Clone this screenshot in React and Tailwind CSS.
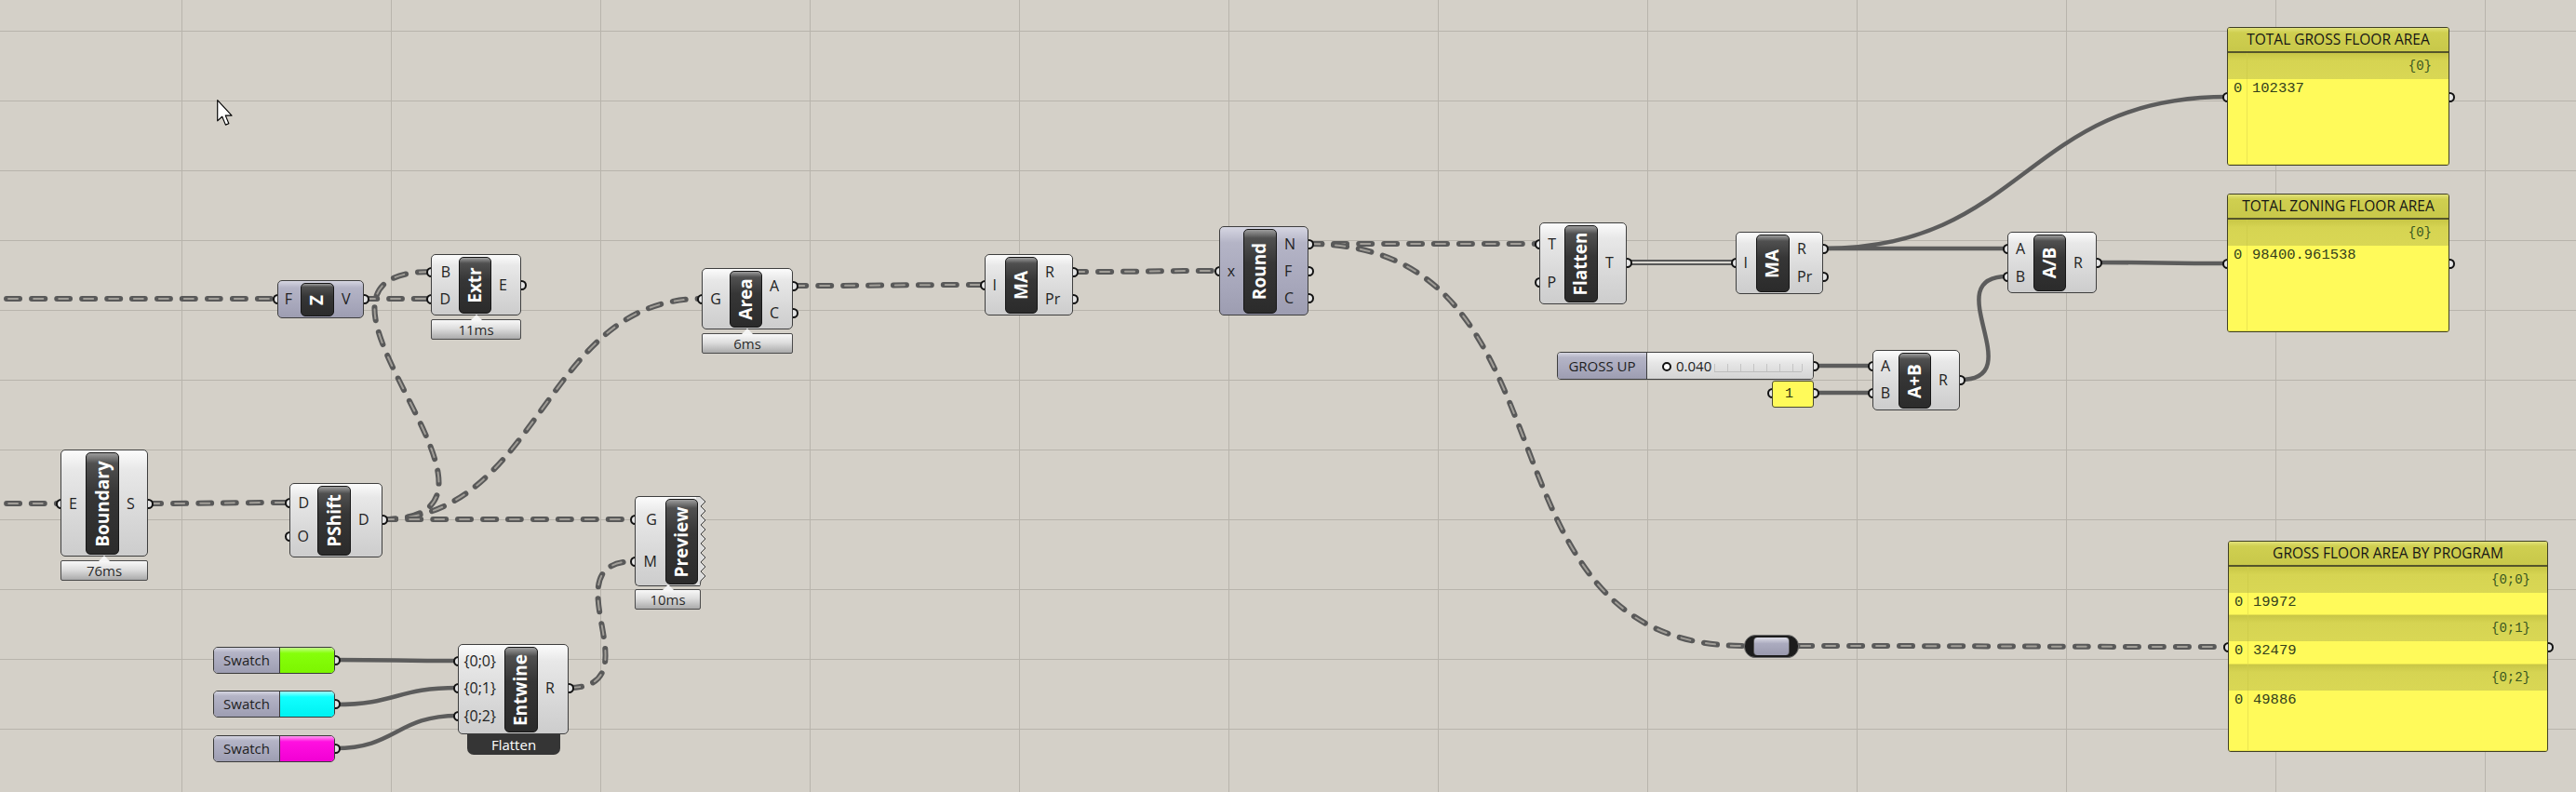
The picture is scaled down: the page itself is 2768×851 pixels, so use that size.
import React from 'react';

// wires: [x1, y1, x2, y2] from an output to an input
const DASHED = [
  [-20, 321, 298, 321],
  [391, 321, 463, 321],
  [411, 558, 463, 292],
  [-20, 541, 65, 541],
  [159, 541, 311, 540],
  [411, 558, 754, 321],
  [411, 558, 682, 558],
  [852, 307, 1058, 306],
  [1153, 292, 1310, 291],
  [1406, 262, 1654, 262],
  [1406, 262, 1874, 694],
  [1933, 694, 2394, 695],
  [611, 739, 682, 603],
];
const SOLID = [
  [1959, 267, 2157, 267],
  [1959, 267, 2393, 104],
  [2253, 282, 2393, 283],
  [1949, 393, 2012, 393],
  [1949, 422, 2012, 422],
  [2106, 408, 2157, 297],
  [360, 709, 492, 710],
  [360, 757, 492, 739],
  [360, 804, 492, 769],
];
const TREE = [[1748, 282, 1865, 282]];

const NODES = [
  { name: 'Z', x: 298, y: 301, w: 93, h: 41, bx: 323, tone: 'purple', ins: [['F', 321]], outs: [['V', 321]] },
  { name: 'Extr', x: 463, y: 273, w: 97, h: 66, bx: 493, bw: 35, ins: [['B', 292], ['D', 321]], outs: [['E', 306]], timer: '11ms' },
  { name: 'Boundary', x: 65, y: 483, w: 94, h: 115, bx: 92, ins: [['E', 541]], outs: [['S', 541]], timer: '76ms' },
  { name: 'PShift', x: 311, y: 519, w: 100, h: 80, bx: 341, ins: [['D', 540], ['O', 576]], outs: [['D', 558]] },
  { name: 'Area', x: 754, y: 288, w: 98, h: 66, bx: 784, bw: 35, ins: [['G', 321]], outs: [['A', 307], ['C', 336]], timer: '6ms' },
  { name: 'MA', x: 1058, y: 273, w: 95, h: 66, bx: 1080, bw: 35, ins: [['I', 306]], outs: [['R', 292], ['Pr', 321]] },
  { name: 'Round', x: 1310, y: 243, w: 96, h: 96, bx: 1336, tone: 'purple', ins: [['x', 291]], outs: [['N', 262], ['F', 291], ['C', 320]] },
  { name: 'Flatten', x: 1654, y: 239, w: 94, h: 88, bx: 1681, ins: [['T', 262], ['P', 303]], outs: [['T', 282]] },
  { name: 'MA', x: 1865, y: 249, w: 94, h: 67, bx: 1887, ins: [['I', 282]], outs: [['R', 267], ['Pr', 297]] },
  { name: 'A+B', x: 2012, y: 376, w: 94, h: 65, bx: 2040, bw: 35, ins: [['A', 393], ['B', 422]], outs: [['R', 408]] },
  { name: 'A/B', x: 2157, y: 249, w: 96, h: 66, bx: 2185, bw: 35, ins: [['A', 267], ['B', 297]], outs: [['R', 282]] },
  { name: 'Entwine', x: 492, y: 692, w: 119, h: 97, bx: 542, ins: [['{0;0}', 710], ['{0;1}', 739], ['{0;2}', 769]], outs: [['R', 739]], tag: 'Flatten' },
];

const SWATCHES = [
  { y: 695, fill: 'bg-[linear-gradient(to_bottom,#c4ff8a,#86ff0a_22%,#7cf500)]' },
  { y: 742, fill: 'bg-[linear-gradient(to_bottom,#9effff,#10ffff_22%,#00f2f2)]' },
  { y: 790, fill: 'bg-[linear-gradient(to_bottom,#ff9cf0,#ff10e0_22%,#f200d4)]' },
];

const LIGHT = 'bg-[linear-gradient(to_bottom,#fcfcfc,#e8e8e8_18%,#d6d6d6_70%,#cdcdcd)]';
const PURPLE = 'bg-[linear-gradient(to_bottom,#d6d6e2,#b4b4c6_18%,#a6a6ba_70%,#9d9db1)]';
const DARK = 'bg-[linear-gradient(to_bottom,#9c9c9c,#505050_10%,#363636_40%,#2b2b2b)]';

// Grasshopper style bezier: handles stretch horizontally from each end.
function wirePath([x1, y1, x2, y2]) {
  const k = Math.max(Math.abs(x2 - x1) * 0.5, Math.abs(y2 - y1) * 0.7);
  return `M${x1} ${y1} C${x1 + k} ${y1} ${x2 - k} ${y2} ${x2} ${y2}`;
}

function Wires() {
  const vlines = [];
  for (let x = -30; x < 2768; x += 225) vlines.push(x);
  const hlines = [];
  for (let y = 33; y < 851; y += 75) hlines.push(y);
  return (
    <svg className="absolute inset-0" width="2768" height="851">
      {vlines.map(x => <line key={'v' + x} x1={x + 0.5} y1="0" x2={x + 0.5} y2="851" stroke="#b8b4ac" strokeWidth="1" />)}
      {hlines.map(y => <line key={'h' + y} x1="0" y1={y + 0.5} x2="2768" y2={y + 0.5} stroke="#b8b4ac" strokeWidth="1" />)}
      {SOLID.map((w, i) => <path key={'s' + i} d={wirePath(w)} fill="none" stroke="#5c5c5c" strokeWidth="4.5" />)}
      {TREE.map((w, i) => (
        <g key={'t' + i}>
          <path d={wirePath(w)} fill="none" stroke="#585858" strokeWidth="6" />
          <path d={wirePath(w)} fill="none" stroke="#d8d5cf" strokeWidth="2" />
        </g>
      ))}
      {DASHED.map((w, i) => (
        <g key={'d' + i}>
          <path d={wirePath(w)} fill="none" stroke="#595959" strokeWidth="6" strokeDasharray="14 13" strokeLinecap="round" />
          <path d={wirePath(w)} fill="none" stroke="#a19e98" strokeWidth="2" strokeDasharray="10 17" strokeDashoffset="-2" strokeLinecap="round" />
        </g>
      ))}
    </svg>
  );
}

function Port({ x, y }) {
  return <div className="absolute h-[11px] w-[11px] rounded-full border-[2.5px] border-[#111] bg-[#e4e4e4]" style={{ left: x - 5.5, top: y - 5.5 }} />;
}

function Timer({ x, y, w, text }) {
  return (
    <div className="absolute h-[22px] rounded-[2px] border border-[#4a4a4a] bg-[linear-gradient(to_bottom,#f8f8f8,#dedede_45%,#aaaaaa)] text-center text-[15px] leading-[20px] text-[#2a2a2a]" style={{ left: x, top: y, width: w }}>
      <div className="absolute -top-[6px] left-1/2 h-0 w-0 -translate-x-1/2 border-x-[6px] border-b-[6px] border-x-transparent border-b-[#f4f4f4]" />
      {text}
    </div>
  );
}

function Node({ name, x, y, w, h, bx, bw = 36, tone, ins, outs, timer, tag }) {
  return (
    <>
      {ins.map(([l, py]) => <Port key={'pi' + l + py} x={x} y={py} />)}
      {outs.map(([l, py]) => <Port key={'po' + l + py} x={x + w} y={py} />)}
      {tag && (
        <div className="absolute flex h-[24px] items-end justify-center rounded-b-[7px] bg-[#353535] pb-[1px] text-[15px] leading-[20px] text-white" style={{ left: x + 10, top: y + h - 2, width: w - 19 }}>
          {tag}
        </div>
      )}
      <div className={`absolute rounded-[5px] border border-[#3e3e3e] ${tone === 'purple' ? PURPLE : LIGHT}`} style={{ left: x, top: y, width: w, height: h }} />
      <div className={`absolute flex items-center justify-center rounded-[5px] border border-[#161616] ${DARK}`} style={{ left: bx, top: y + 3, width: bw, height: h - 5 }}>
        <span className="-rotate-90 whitespace-nowrap text-[19px] font-bold leading-none text-white">{name}</span>
      </div>
      {ins.map(([l, py]) => (
        <div key={'li' + l + py} className="absolute -translate-y-1/2 text-right text-[16px] leading-none text-[#222]" style={{ left: x, width: bx - 9 - x, top: py }}>{l}</div>
      ))}
      {outs.map(([l, py]) => (
        <div key={'lo' + l + py} className="absolute -translate-y-1/2 text-[16px] leading-none text-[#222]" style={{ left: bx + bw + 8, top: py }}>{l}</div>
      ))}
      {timer && <Timer x={x} y={y + h + 4} w={w} text={timer} />}
    </>
  );
}

function Preview() {
  return (
    <>
      <Port x={682} y={558} />
      <Port x={682} y={603} />
      <div className={`absolute left-[682px] top-[533px] h-[97px] w-[70px] rounded-l-[5px] border-y border-l border-[#3e3e3e] ${LIGHT}`} />
      <svg className="absolute left-[748px] top-[533px]" width="12" height="97">
        <path d="M0 0.5 L4 0.5 L10 6 L5 11 L10 16 L5 21 L10 26 L5 31 L10 36 L5 41 L10 46 L5 51 L10 56 L5 61 L10 66 L5 71 L10 76 L5 81 L10 86 L5 91 L4 96.5 L0 96.5 Z" fill="#dcdcdc" stroke="#3e3e3e" strokeWidth="1" />
        <rect x="0" y="1" width="4" height="95" fill="#dcdcdc" />
      </svg>
      <div className={`absolute left-[715px] top-[536px] flex h-[92px] w-[35px] items-center justify-center rounded-[5px] border border-[#161616] ${DARK}`}>
        <span className="-rotate-90 whitespace-nowrap text-[19px] font-bold leading-none text-white">Preview</span>
      </div>
      <div className="absolute left-[682px] top-[558px] w-[24px] -translate-y-1/2 text-right text-[16px] leading-none text-[#222]">G</div>
      <div className="absolute left-[682px] top-[603px] w-[24px] -translate-y-1/2 text-right text-[16px] leading-none text-[#222]">M</div>
      <Timer x={682} y={633} w={71} text="10ms" />
    </>
  );
}

function Swatch({ y, fill }) {
  return (
    <>
      <Port x={360} y={y + 14} />
      <div className="absolute left-[229px] flex h-[29px] w-[131px] overflow-hidden rounded-[5px] border border-[#3a3a3a]" style={{ top: y }}>
        <div className={`flex w-[71px] items-center justify-center border-r border-[#3a3a3a] text-[15px] text-[#1e1e1e] ${PURPLE}`}>Swatch</div>
        <div className={`flex-1 ${fill}`} />
      </div>
    </>
  );
}

function Slider() {
  return (
    <>
      <Port x={1949} y={393} />
      <div className="absolute left-[1673px] top-[378px] flex h-[30px] w-[276px] overflow-hidden rounded-[4px] border border-[#3e3e3e]">
        <div className={`flex w-[96px] items-center justify-center border-r border-[#3e3e3e] text-[15px] text-[#1e1e1e] ${PURPLE}`}>GROSS UP</div>
        <div className="relative flex-1 bg-[linear-gradient(to_bottom,#fafafa,#e6e6e6_40%,#d4d4d4)]">
          <div className="absolute left-[16px] top-[10px] h-[10px] w-[10px] rounded-full border-[2.5px] border-[#111] bg-white" />
          <div className="absolute left-[31px] top-[5px] text-[15px] leading-[18px] text-[#222]">0.040</div>
          <svg className="absolute left-[72px] top-[8px]" width="96" height="14">
            <line x1="0" y1="12.5" x2="94" y2="12.5" stroke="#bdbdbd" />
            {[0, 14, 28, 42, 56, 70, 84, 94].map(t => <line key={t} x1={t + 0.5} y1="4" x2={t + 0.5} y2="12" stroke="#c4c4c4" />)}
          </svg>
        </div>
      </div>
    </>
  );
}

function NumPanel() {
  return (
    <>
      <Port x={1904} y={422} />
      <Port x={1949} y={422} />
      <div className="absolute left-[1904px] top-[409px] h-[29px] w-[45px] rounded-[3px] border border-[#4a4a30] bg-[#fffa5a] pl-[13px] font-['Liberation_Mono',monospace] text-[15px] leading-[27px] text-[#2c3412]">1</div>
    </>
  );
}

function Relay() {
  return (
    <div className="absolute left-[1874px] top-[682px] h-[25px] w-[59px] rounded-[12px] border border-[#6a6a6a] bg-[#1c1c1c] px-[9px] py-[2px]">
      <div className="h-full w-full rounded-[4px] border-x border-[#555] bg-[linear-gradient(to_bottom,#dcdce6,#ababbf_35%,#9a9aae)]" />
    </div>
  );
}

function Panel({ x, y, w, h, title, sections, portY }) {
  return (
    <>
      <Port x={x} y={portY} />
      <Port x={x + w} y={portY} />
      <div className="absolute flex flex-col overflow-hidden rounded-[3px] border border-[#3f3f26] bg-[#fffa5a]" style={{ left: x, top: y, width: w, height: h }}>
        <div className="flex h-[27px] shrink-0 items-center justify-center border-b-2 border-[#55552a] bg-[linear-gradient(to_bottom,#e2e27a,#cfcf50_20%,#c8c84a)] text-[15.5px] text-[#151515]">{title}</div>
        {sections.map((s, i) => s.branch ? (
          <div key={i} className="relative flex h-[28px] shrink-0 items-center justify-end bg-[linear-gradient(to_bottom,#c8c646,#d6d452_30%,#d9d754)] pr-[18px] font-['Liberation_Mono',monospace] text-[14px] text-[#38561f]">
            <div className="absolute bottom-0 left-[20px] top-0 w-px bg-[#cfcd4c]" />
            {s.branch}
          </div>
        ) : (
          <div key={i} className={`relative flex shrink-0 items-start border-b border-[#e7e24f] font-['Liberation_Mono',monospace] text-[15.5px] leading-[20px] text-[#33401a] ${s.grow ? 'flex-1' : ''}`} style={s.grow ? undefined : { height: s.h }}>
            <div className="absolute bottom-0 left-[20px] top-0 w-px bg-[#ebe552]" />
            <span className="w-[26px] shrink-0 pl-[6px]">0</span>
            <span>{s.value}</span>
          </div>
        ))}
      </div>
    </>
  );
}

function Cursor() {
  return (
    <svg className="absolute left-[233px] top-[107px]" width="20" height="30" viewBox="0 0 14 21">
      <path d="M0.5 0.5 L0.5 16 L4 12.8 L6.6 19 L9 18 L6.5 12 L11.2 12 Z" fill="#fff" stroke="#000" strokeWidth="0.8" strokeLinejoin="round" />
    </svg>
  );
}

export default function App() {
  return (
    <div className="relative h-[851px] w-[2768px] overflow-hidden bg-[#d4d0c8] font-['Open_Sans','Noto_Sans',sans-serif] text-[#1f1f1f]">
      <Wires />
      {NODES.map((n, i) => <Node key={i} {...n} />)}
      <Preview />
      {SWATCHES.map(s => <Swatch key={s.y} {...s} />)}
      <Slider />
      <NumPanel />
      <Relay />
      <Panel x={2393} y={29} w={239} h={149} portY={104} title="TOTAL GROSS FLOOR AREA"
        sections={[{ branch: '{0}' }, { value: '102337', grow: true }]} />
      <Panel x={2393} y={208} w={239} h={149} portY={283} title="TOTAL ZONING FLOOR AREA"
        sections={[{ branch: '{0}' }, { value: '98400.961538', grow: true }]} />
      <Panel x={2394} y={581} w={344} h={227} portY={695} title="GROSS FLOOR AREA BY PROGRAM"
        sections={[
          { branch: '{0;0}' }, { value: '19972', h: 24 },
          { branch: '{0;1}' }, { value: '32479', h: 25 },
          { branch: '{0;2}' }, { value: '49886', grow: true },
        ]} />
      <Cursor />
    </div>
  );
}
